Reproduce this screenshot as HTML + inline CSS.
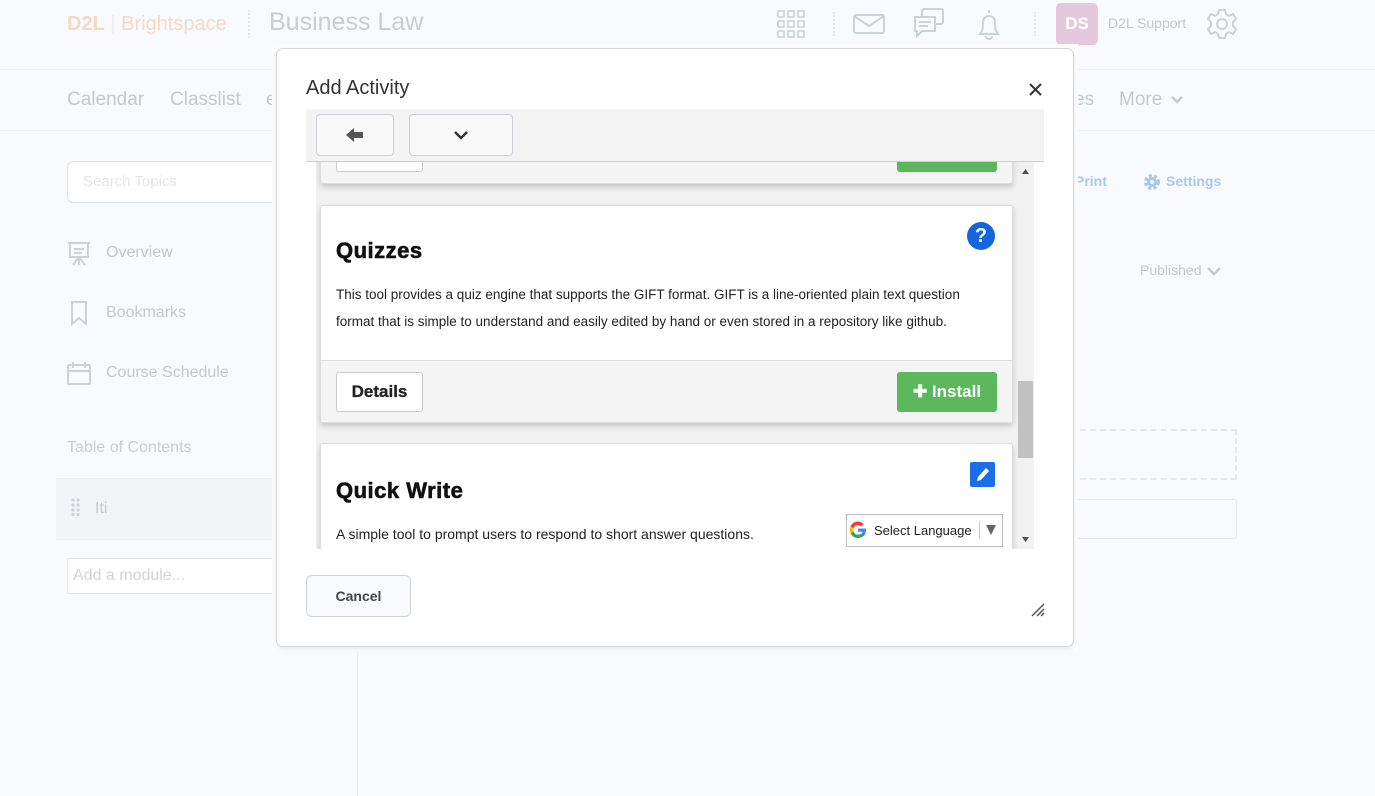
<!DOCTYPE html>
<html><head><meta charset="utf-8"><style>
*{box-sizing:border-box;margin:0;padding:0}
body{width:1375px;height:796px;overflow:hidden;background:#f9fafd;font-family:"Liberation Sans",sans-serif;position:relative;color:#ccd0d8}
.a{position:absolute}
.btn{position:absolute;background:#fff;border:1px solid #c9c9c9;border-radius:3px;font-weight:bold;color:#222;font-size:17px;display:flex;align-items:center;justify-content:center}
.inst{position:absolute;background:#5cb85c;border-radius:3px;color:#fff;font-weight:bold;font-size:17px;display:flex;align-items:center;justify-content:center}
.card{position:absolute;left:320px;width:693px;background:#fff;border:1px solid #ddd;border-radius:3px;box-shadow:0 3px 6px rgba(0,0,0,.18)}
</style></head><body>
<div class="a" style="left:0;top:69px;width:1375px;height:1px;background:#eef0f4"></div>
<div class="a" style="left:0;top:130px;width:1375px;height:1px;background:#eef0f4"></div>
<div class="a" style="left:67px;top:13px;font-size:20px;color:#f6d9c3"><b>D2L</b> <span style="color:#eee">|</span> Brightspace</div>
<div class="a" style="left:248px;top:10px;width:0;height:28px;border-left:2px dotted #e6e8ec"></div>
<div class="a" style="left:269px;top:8px;font-size:25px;color:#c8ccd3">Business Law</div>
<svg class="a" style="left:777px;top:10px" width="30" height="30" viewBox="0 0 30 30" fill="none" stroke="#cdd1d8" stroke-width="1.6"><g><rect x="1" y="1" width="6" height="6"/><rect x="11" y="1" width="6" height="6"/><rect x="21" y="1" width="6" height="6"/><rect x="1" y="11" width="6" height="6"/><rect x="11" y="11" width="6" height="6"/><rect x="21" y="11" width="6" height="6"/><rect x="1" y="21" width="6" height="6"/><rect x="11" y="21" width="6" height="6"/><rect x="21" y="21" width="6" height="6"/></g></svg>
<div class="a" style="left:833px;top:12px;height:24px;border-left:2px dotted #e6e8ec"></div>
<svg class="a" style="left:853px;top:14px" width="32" height="20" fill="none" stroke="#cdd1d8" stroke-width="2"><rect x="1" y="1" width="30" height="18" rx="2"/><path d="M1 2l15 10 15-10"/></svg>
<svg class="a" style="left:913px;top:8px" width="32" height="32" fill="none" stroke="#cdd1d8" stroke-width="2"><rect x="9" y="1" width="21" height="15" rx="2"/><path d="M2 9h20v14H9l-5 5v-5H2z" fill="#f9fafd"/><path d="M6 14h12M6 18h9"/></svg>
<svg class="a" style="left:975px;top:8px" width="28" height="32" fill="none" stroke="#cdd1d8" stroke-width="2"><path d="M14 2v3M5 26c2-3 3-5 3-12a6 6 0 0112 0c0 7 1 9 3 12z M11 28a3 3 0 006 0"/></svg>
<div class="a" style="left:1034px;top:12px;height:24px;border-left:2px dotted #e6e8ec"></div>
<div class="a" style="left:1056px;top:3px;width:42px;height:42px;background:#e4c8dc;border-radius:5px;color:#fff;font-weight:bold;font-size:17px;display:flex;align-items:center;justify-content:center">DS</div>
<div class="a" style="left:1108px;top:15px;font-size:14px;color:#c4c8cf">D2L Support</div>
<svg class="a" style="left:1206px;top:8px" width="32" height="32" viewBox="0 0 32 32" fill="none" stroke="#cdd1d8" stroke-width="2"><circle cx="16" cy="16" r="5"/><path d="M13 2h6l1 4 3 2 4-2 3 5-3 3v4l3 3-3 5-4-2-3 2-1 4h-6l-1-4-3-2-4 2-3-5 3-3v-4l-3-3 3-5 4 2 3-2z"/></svg>
<div class="a" style="left:67px;top:89px;font-size:19px;color:#c4c8cf">Calendar</div>
<div class="a" style="left:170px;top:89px;font-size:19px;color:#c4c8cf">Classlist</div>
<div class="a" style="left:266px;top:89px;font-size:19px;color:#c4c8cf">e</div>
<div class="a" style="left:1074px;top:89px;font-size:19px;color:#c4c8cf">es</div>
<div class="a" style="left:1119px;top:89px;font-size:19px;color:#c4c8cf">More</div>
<svg class="a" style="left:1171px;top:96px" width="12" height="9" fill="none" stroke="#c4c8cf" stroke-width="2.5"><path d="M1 1l5 5 5-5"/></svg>
<div class="a" style="left:67px;top:161px;width:230px;height:42px;border:1px solid #dde0e6;border-radius:6px;background:#fff"></div>
<div class="a" style="left:83px;top:173px;font-size:15px;color:#e3e5ea">Search Topics</div>
<svg class="a" style="left:67px;top:241px" width="24" height="26" fill="none" stroke="#cdd1d8" stroke-width="2"><path d="M1 2h22M3 2v14h18V2M7 8h10M7 12h8M12 16v8M6 24l6-8 6 8"/></svg>
<div class="a" style="left:106px;top:244px;font-size:16px;color:#c4c8cf">Overview</div>
<svg class="a" style="left:70px;top:300px" width="18" height="26" fill="none" stroke="#cdd1d8" stroke-width="2"><path d="M2 2h14v22l-7-6-7 6z"/></svg>
<div class="a" style="left:106px;top:304px;font-size:16px;color:#c4c8cf">Bookmarks</div>
<svg class="a" style="left:67px;top:361px" width="25" height="25" fill="none" stroke="#cdd1d8" stroke-width="2"><rect x="1" y="4" width="22" height="19" rx="1"/><path d="M1 10h22M6 1v6M18 1v6"/></svg>
<div class="a" style="left:106px;top:364px;font-size:16px;color:#c4c8cf">Course Schedule</div>
<div class="a" style="left:67px;top:439px;font-size:16px;color:#c8ccd3">Table of Contents</div>
<div class="a" style="left:56px;top:478px;width:302px;height:62px;background:#f3f4f7;border-top:1px solid #eceef2;border-bottom:1px solid #eceef2"></div>
<svg class="a" style="left:71px;top:498px" width="9" height="18" fill="#cdd1d8"><circle cx="2" cy="2" r="1.6"/><circle cx="7" cy="2" r="1.6"/><circle cx="2" cy="7" r="1.6"/><circle cx="7" cy="7" r="1.6"/><circle cx="2" cy="12" r="1.6"/><circle cx="7" cy="12" r="1.6"/><circle cx="2" cy="16.5" r="1.6"/><circle cx="7" cy="16.5" r="1.6"/></svg>
<div class="a" style="left:95px;top:500px;font-size:16px;color:#c4c8cf">Iti</div>
<div class="a" style="left:67px;top:558px;width:230px;height:36px;border:1px solid #e3e5ea;background:#fff;border-radius:3px"></div>
<div class="a" style="left:73px;top:567px;font-size:16px;color:#d0d3d9">Add a module...</div>
<div class="a" style="left:357px;top:650px;width:1px;height:146px;background:#eceef2"></div>
<div class="a" style="left:1075px;top:173px;font-size:14px;color:#a9c9ea;font-weight:bold">Print</div>
<svg class="a" style="left:1142px;top:172px" width="20" height="20" viewBox="0 0 20 20"><circle cx="10" cy="10" r="6" fill="none" stroke="#a9c9ea" stroke-width="4" stroke-dasharray="3 2"/><circle cx="10" cy="10" r="5" fill="#a9c9ea"/><circle cx="10" cy="10" r="2" fill="#f9fafd"/></svg>
<div class="a" style="left:1166px;top:173px;font-size:14px;color:#a9c9ea;font-weight:bold">Settings</div>
<div class="a" style="left:1140px;top:262px;font-size:14px;color:#c4c8cf">Published</div>
<svg class="a" style="left:1207px;top:267px" width="14" height="9" fill="none" stroke="#c4c8cf" stroke-width="2.5"><path d="M1 1l6 6 6-6"/></svg>
<div class="a" style="left:1070px;top:429px;width:167px;height:51px;border:2px dashed #e6e8ec;border-left:none"></div>
<div class="a" style="left:1070px;top:499px;width:167px;height:40px;border:1px solid #e6e8ec;border-left:none;border-radius:0 3px 3px 0"></div>
<!-- modal -->
<div class="a" style="left:272px;top:44px;width:806px;height:607px;background:#fcfcfd"></div>
<div class="a" style="left:276px;top:48px;width:798px;height:599px;background:#fff;border:1px solid #d4d7dd;border-radius:7px;box-shadow:0 2px 4px rgba(0,0,0,.08)"></div>
<div class="a" style="left:306px;top:77px;font-size:20px;color:#333">Add Activity</div>
<svg class="a" style="left:1029px;top:83px" width="13" height="13" stroke="#333" stroke-width="2"><path d="M1 1l11 11M12 1L1 12"/></svg>
<div class="a" style="left:306px;top:161px;width:728px;height:388px;background:#f1f1f1;overflow:hidden">
 <div class="a" style="left:0;top:0;width:10px;height:388px;background:#fff"></div>
 <div class="a" style="left:711px;top:0;width:17px;height:388px;background:#f1f1f1"></div>
 <div class="a" style="left:712px;top:220px;width:15px;height:77px;background:#c1c1c1"></div>
 <svg class="a" style="left:716px;top:8px" width="7" height="5" fill="#505050"><path d="M0 5L3.5 0 7 5z"/></svg>
 <svg class="a" style="left:716px;top:376px" width="7" height="5" fill="#505050"><path d="M0 0L3.5 5 7 0z"/></svg>
</div>
<div class="card" style="top:140px;height:44px;background:#f4f4f4;border-top:none"></div>
<div class="btn" style="left:336px;top:150px;width:87px;height:22px"></div>
<div class="inst" style="left:897px;top:150px;width:100px;height:22px"></div>
<div class="card" style="top:205px;height:218px"></div>
<div class="a" style="left:321px;top:360px;width:691px;height:62px;background:#f4f4f4;border-top:1px solid #ddd"></div>
<div class="a" style="left:336px;top:238px;font-size:22px;font-weight:900;color:#111;letter-spacing:0.5px;-webkit-text-stroke:0.6px #111">Quizzes</div>
<div class="a" style="left:967px;top:222px;width:28px;height:28px;border-radius:50%;background:#1565e0;color:#fff;font-weight:bold;font-size:20px;text-align:center;line-height:28px">?</div>
<div class="a" style="left:336px;top:281px;width:665px;font-size:13.5px;line-height:27px;color:#222">This tool provides a quiz engine that supports the GIFT format. GIFT is a line-oriented plain text question format that is simple to understand and easily edited by hand or even stored in a repository like github.</div>
<div class="btn" style="left:336px;top:372px;width:87px;height:40px;-webkit-text-stroke:0.3px #222">Details</div>
<div class="inst" style="left:897px;top:372px;width:100px;height:40px">✚&nbsp;Install</div>
<div class="a" style="left:316px;top:443px;width:702px;height:106px;overflow:hidden">
 <div class="a" style="left:4px;top:0;width:693px;height:200px;background:#fff;border:1px solid #ddd;border-radius:3px;box-shadow:0 3px 6px rgba(0,0,0,.18)"></div>
</div>
<div class="a" style="left:336px;top:478px;font-size:22px;font-weight:900;color:#111;letter-spacing:0.5px;-webkit-text-stroke:0.6px #111">Quick Write</div>
<div class="a" style="left:970px;top:462px;width:25px;height:25px;background:#1a6fe8;border-radius:2px"></div>
<svg class="a" style="left:975px;top:466px" width="16" height="17" fill="#fff"><path d="M11 2l3 3-8 9-4 1 1-4z"/></svg>
<div class="a" style="left:336px;top:526px;font-size:14px;color:#222">A simple tool to prompt users to respond to short answer questions.</div>
<div class="a" style="left:846px;top:514px;width:157px;height:33px;background:#fff;border:1px solid #bbb"></div>
<svg class="a" style="left:849px;top:521px" width="18" height="18" viewBox="0 0 18 18"><path d="M17 9.2c0-.6 0-1.1-.1-1.6H9v3.1h4.5a3.9 3.9 0 01-1.7 2.5v2h2.7c1.6-1.4 2.5-3.5 2.5-6z" fill="#4285f4"/><path d="M9 17c2.3 0 4.2-.8 5.5-2.1l-2.7-2a5 5 0 01-7.4-2.6H1.6v2.1A8 8 0 009 17z" fill="#34a853"/><path d="M4.4 10.3a4.8 4.8 0 010-3.1V5.1H1.6a8 8 0 000 7.3z" fill="#fbbc05"/><path d="M9 4.2c1.3 0 2.4.4 3.3 1.3l2.4-2.4A8 8 0 001.6 5.1l2.8 2.1A4.8 4.8 0 019 4.2z" fill="#ea4335"/></svg>
<div class="a" style="left:874px;top:523px;font-size:13px;color:#222">Select Language</div>
<div class="a" style="left:979px;top:521px;height:18px;border-left:1px solid #ccc"></div>
<svg class="a" style="left:986px;top:525px" width="10" height="10" fill="#666"><path d="M0 0h10L5 10z"/></svg>
<!-- toolbar -->
<div class="a" style="left:306px;top:109px;width:738px;height:53px;background:#f3f3f3;border-bottom:1px solid #cfcfcf"></div>
<div class="a" style="left:316px;top:114px;width:78px;height:42px;border:1px solid #ccd0d6;border-radius:4px;background:#f8f8f8"></div>
<svg class="a" style="left:346px;top:128px" width="17" height="14" fill="#555"><path d="M0 7L8 0v4h9v6H8v4z"/></svg>
<div class="a" style="left:409px;top:114px;width:104px;height:42px;border:1px solid #ccd0d6;border-radius:4px;background:#f8f8f8"></div>
<svg class="a" style="left:454px;top:130px" width="14" height="10" fill="none" stroke="#333" stroke-width="2.5"><path d="M1 2l6 6 6-6"/></svg>
<div class="a" style="left:306px;top:575px;width:105px;height:42px;border:1px solid #cdd1d8;border-radius:6px;background:#f9fafd;font-size:14px;font-weight:bold;color:#444;text-align:center;line-height:40px">Cancel</div>
<svg class="a" style="left:1031px;top:603px" width="14" height="14" stroke="#555" stroke-width="1.5"><path d="M1 13L13 1M6 13l7-7M10 13l3-3"/></svg>
</body></html>
